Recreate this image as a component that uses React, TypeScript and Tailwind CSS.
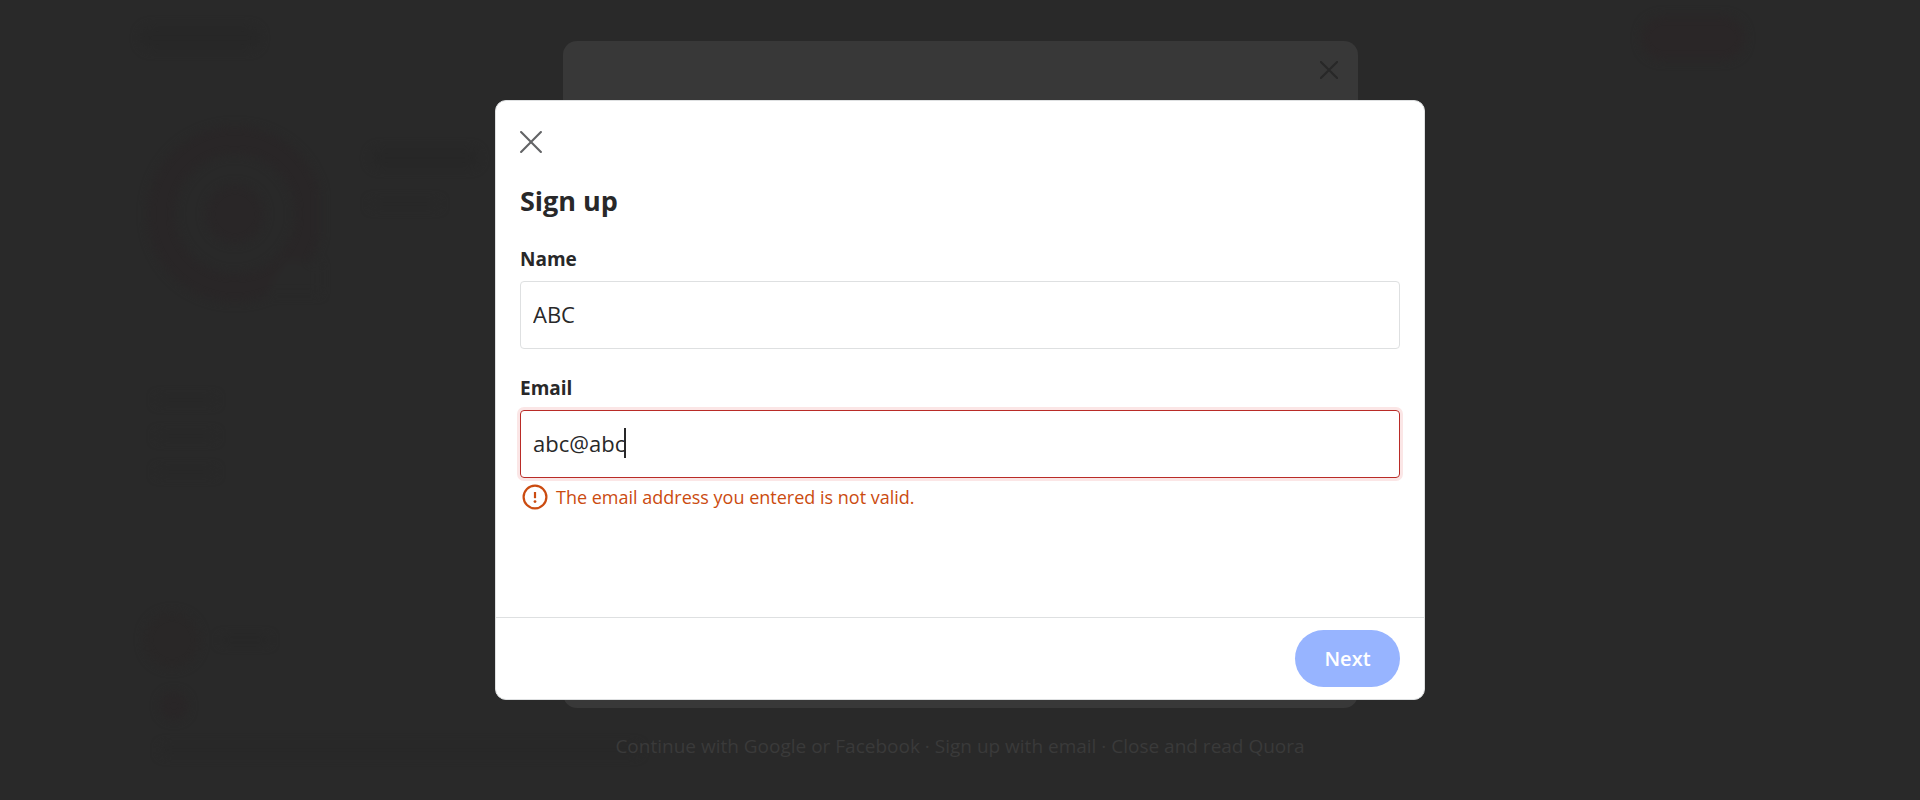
import { useState } from "react";

function CloseIcon({ className, strokeWidth }: { className: string; strokeWidth: number }) {
  return (
    <svg className={className} viewBox="0 0 24 24" fill="none" stroke="currentColor" strokeWidth={strokeWidth} strokeLinecap="round" aria-hidden="true">
      <path d="M1.2 1.2l21.6 21.6M22.8 1.2L1.2 22.8" />
    </svg>
  );
}

function AlertIcon() {
  return (
    <svg className="size-[30px] shrink-0" viewBox="0 0 30 30" fill="none" stroke="currentColor" strokeWidth="2.2" aria-hidden="true">
      <circle cx="15" cy="15" r="11.4" />
      <path d="M15 10v6.2" />
      <circle cx="15" cy="19.6" r="1.4" fill="currentColor" stroke="none" />
    </svg>
  );
}

function Backdrop() {
  return (
    <div aria-hidden="true" className="absolute inset-0 flex flex-col gap-14 overflow-hidden px-[140px] pt-4 blur-[5px]">
      <div className="flex items-center justify-between">
        <div className="h-6 w-[120px] rounded-full bg-[#272727]" />
        <div className="mr-[35px] h-11 w-[104px] rounded-full bg-[#2a2627]" />
      </div>
      <div className="flex gap-[50px] pt-2">
        <svg className="size-[180px] shrink-0" viewBox="0 0 180 180" fill="none">
          <circle cx="95" cy="90" r="74" stroke="#292627" strokeWidth="28" />
          <circle cx="95" cy="90" r="29" fill="#292627" />
          <path d="M125 170l60 0 0-30-40-5z" fill="#292929" />
        </svg>
        <div className="flex flex-col gap-8 pt-6">
          <div className="h-5 w-[110px] rounded-full bg-[#272727]" />
          <div className="h-2 w-[70px] rounded-full bg-[#282828]" />
        </div>
      </div>
      <div className="mt-9 flex flex-col gap-7 pl-4">
        <div className="h-2 w-[60px] rounded-full bg-[#282828]" />
        <div className="h-2 w-[60px] rounded-full bg-[#282828]" />
        <div className="h-2 w-[60px] rounded-full bg-[#282828]" />
      </div>
      <div className="mt-20 flex flex-col gap-6">
        <div className="flex items-center gap-5 pl-1">
          <div className="size-14 rounded-full bg-[#292727]" />
          <div className="h-2 w-[50px] rounded-full bg-[#272727]" />
        </div>
        <div className="ml-5 size-7 rounded-full bg-[#292627]" />
        <div className="ml-5 h-3 w-[480px] rounded-full bg-[#282828]" />
      </div>
    </div>
  );
}

export default function App() {
  const [name, setName] = useState("ABC");
  const [email, setEmail] = useState("abc@abc");

  return (
    <div className="relative grid min-h-screen grid-cols-1 place-items-center overflow-hidden bg-[#292929] font-['Open_Sans','Noto_Sans',sans-serif] text-[#282829]">
      <Backdrop />

      <div className="relative col-start-1 row-start-1 flex w-full flex-col items-center gap-6">
        <div className="flex h-[667px] w-full max-w-[795px] items-start justify-end rounded-[14px] bg-[#383838] p-5 text-[#282828]">
          <CloseIcon className="size-[18px]" strokeWidth={2.8} />
        </div>
        <p className="text-[19px] leading-7 text-[#3a3a3a]">
          Continue with Google or Facebook · Sign up with email · Close and read Quora
        </p>
      </div>

      <div
        role="dialog"
        aria-modal="true"
        aria-labelledby="signup-title"
        className="relative col-start-1 row-start-1 w-full max-w-[930px] rounded-[11px] border border-[#dee0e1] bg-white"
      >
        <form className="flex min-h-[598px] flex-col" onSubmit={(e) => e.preventDefault()}>
          <div className="flex flex-1 flex-col px-6 pt-[30px]">
            <button type="button" aria-label="Close" className="self-start text-[#636466]">
              <CloseIcon className="size-[22px]" strokeWidth={2.3} />
            </button>
            <h1 id="signup-title" className="mt-[30px] text-[27px] leading-9 font-bold">
              Sign up
            </h1>
            <label htmlFor="name" className="mt-[26px] text-[19px] leading-7 font-bold">
              Name
            </label>
            <input
              id="name"
              type="text"
              value={name}
              onChange={(e) => setName(e.target.value)}
              className="mt-2 h-[68px] w-full rounded-[4px] border border-[#dee0e1] px-3 pb-0.5 text-[22px] outline-none"
            />
            <label htmlFor="email" className="mt-[25px] text-[19px] leading-7 font-bold">
              Email
            </label>
            <div className="relative mt-2">
              <input
                id="email"
                type="email"
                value={email}
                onChange={(e) => setEmail(e.target.value)}
                aria-invalid="true"
                aria-describedby="email-error"
                className="block h-[68px] w-full rounded-[4px] border border-[#b92b27] px-3 pb-0.5 text-[22px] caret-transparent ring-3 ring-[#fbe6e6] outline-none"
              />
              <span aria-hidden="true" className="absolute top-[18px] left-[104px] h-[30px] w-0.5 bg-[#282829]" />
            </div>
            <p id="email-error" className="mt-1 flex items-center gap-[6px] text-[18px] leading-7 text-[#cb4b10]">
              <AlertIcon />
              The email address you entered is not valid.
            </p>
          </div>
          <div className="flex justify-end border-t border-[#dee0e1] px-6 py-3">
            <button type="submit" className="h-[57px] w-[105px] rounded-full bg-[#97b4ff] text-[20px] font-semibold text-white">
              Next
            </button>
          </div>
        </form>
      </div>
    </div>
  );
}
